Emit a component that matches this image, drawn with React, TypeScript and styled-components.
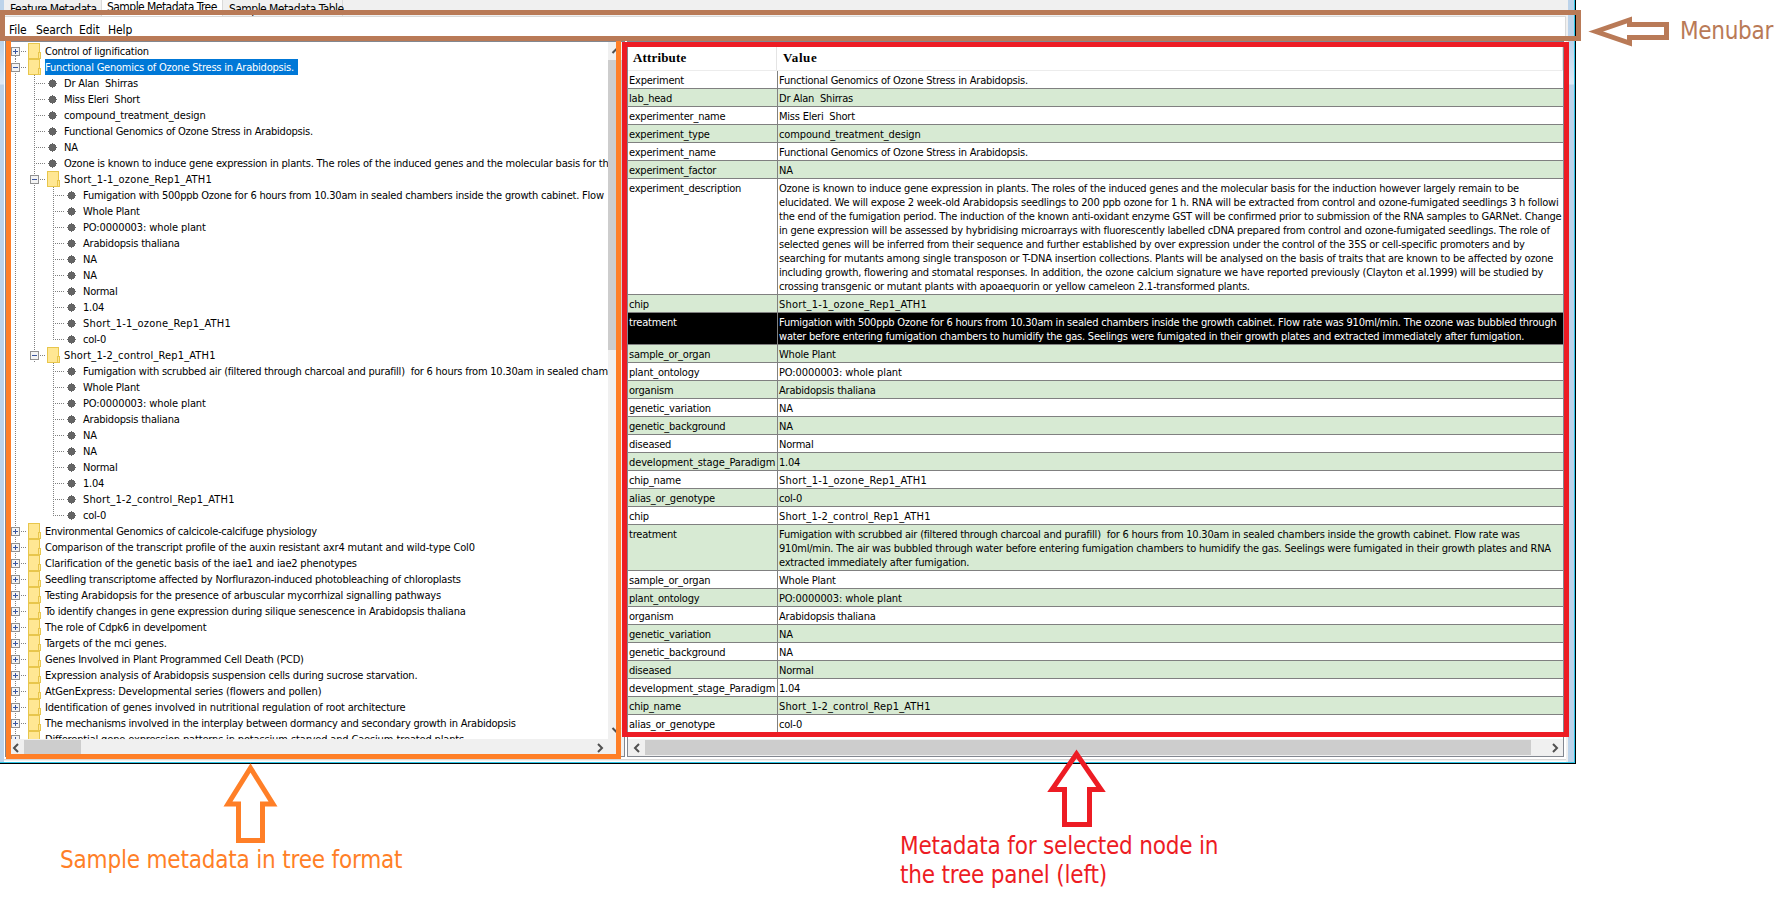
import React from 'react';
import styled, { createGlobalStyle } from 'styled-components';

const GlobalStyle = createGlobalStyle`
  * { box-sizing: border-box; }
  body {
    margin: 0;
    background: #fff;
    font-family: 'DejaVu Sans Condensed', 'DejaVu Sans', sans-serif;
    font-stretch: condensed;
    font-size: 11px;
    color: #000;
    overflow: hidden;
  }
`;

const GREY = '#828790';
const dots = 'repeating-linear-gradient(#808080 0 1px, transparent 1px 2px)';
const dotsX = 'repeating-linear-gradient(90deg, #808080 0 1px, transparent 1px 2px)';

const Page = styled.div`
  position: relative;
  width: 1783px;
  height: 897px;
  overflow: hidden;
`;

const Window = styled.div`
  width: 1576px;
  height: 764px;
  display: flex;
  flex-direction: column;
  border-right: 1px solid #000;
  border-bottom: 1px solid #000;
  background: #f0f0f0;
`;

const Frame = styled.div`
  flex: 1;
  min-height: 0;
  display: flex;
  border-right: 1px solid #2ec4e6;
  border-bottom: 1px solid #2ec4e6;
`;

const Edge = styled.div<{ $w: number }>`
  width: ${(p) => p.$w}px;
  background: linear-gradient(#bcd3ea 0 42px, #dfeaf6 84px, #bcd3ea 85px);
`;

const Client = styled.div`
  flex: 1;
  min-width: 0;
  display: flex;
  flex-direction: column;
  background: #fff;
  border-right: 2px solid #f0f0f0;
`;

const BottomLine = styled.div`
  height: 2px;
  margin-top: 2px;
  border-top: 1px solid #d9d9d9;
  background: #f0f0f0;
`;

const TabStrip = styled.div`
  height: 16px;
  display: flex;
  background: #f0f0f0;
  font-size: 12px;
  line-height: 14px;
  white-space: pre;
`;

const Tab = styled.div<{ $w: number; $active?: boolean }>`
  width: ${(p) => p.$w}px;
  padding: ${(p) => (p.$active ? '0 0 0 5px' : '2px 0 0 6px')};
  height: 16px;
  background: ${(p) => (p.$active ? '#fff' : '#f0f0f0')};
  border-right: 1px solid #d9d9d9;
  letter-spacing: -0.55px;
`;

const MenuBar = styled.div`
  height: 25px;
  display: flex;
  gap: 9px;
  padding: 6px 0 0 5px;
  border-top: 1px solid #d9d9d9;
  border-right: 1px solid #d9d9d9;
  font-size: 12px;
  line-height: 14px;
`;

const MenuItem = styled.span<{ $w: number }>`
  width: ${(p) => p.$w}px;
  letter-spacing: -0.1px;
  white-space: nowrap;
`;

const Panels = styled.div`
  height: 716px;
  display: flex;
  gap: 2px;
  padding-left: 1px;
`;

const Panel = styled.div<{ $w: number }>`
  width: ${(p) => p.$w}px;
  border: 1px solid ${GREY};
  display: flex;
  flex-direction: column;
  background: #fff;
  overflow: hidden;
`;

const TreeArea = styled.div`
  height: 697px;
  display: flex;
`;

const Tree = styled.div`
  width: 602px;
  padding: 1px 0 0 5px;
  overflow: hidden;
`;

const TreeRow = styled.div`
  height: 16px;
  display: flex;
  line-height: 17px;
  white-space: pre;
`;

const Rail = styled.div<{ $on: boolean }>`
  width: 19px;
  height: 16px;
  flex: none;
  padding-left: 4px;
  &::before {
    content: '';
    display: block;
    width: 1px;
    height: 16px;
    background: ${(p) => (p.$on ? dots : 'none')};
  }
`;

const Elbow = styled.div<{ $last?: boolean }>`
  width: 18px;
  height: 16px;
  flex: none;
  padding-left: 4px;
  display: flex;
  align-items: flex-start;
  &::before {
    content: '';
    width: 1px;
    height: ${(p) => (p.$last ? 9 : 16)}px;
    background: ${dots};
  }
  &::after {
    content: '';
    margin: 8px 0 0 1px;
    width: 9px;
    height: 1px;
    background: ${dotsX};
  }
`;

const Toggle = styled.svg`
  width: 17px;
  height: 16px;
  flex: none;
`;

const Folder = styled.svg`
  width: 13px;
  height: 16px;
  flex: none;
  margin-right: 4px;
`;

const Bullet = styled.svg`
  width: 9px;
  height: 16px;
  flex: none;
  margin-right: 7px;
`;

const Label = styled.span<{ $selected?: boolean; $ls: number }>`
  height: 16px;
  letter-spacing: ${(p) => p.$ls}px;
  padding-right: ${(p) => (p.$selected ? 4 : 0)}px;
  color: ${(p) => (p.$selected ? '#fff' : '#000')};
  background: ${(p) => (p.$selected ? '#0078d7' : 'transparent')};
`;

const VScroll = styled.div`
  width: 16px;
  flex: none;
  display: flex;
  flex-direction: column;
  background: #f0f0f0;
`;

const HScroll = styled.div<{ $corner?: boolean }>`
  height: 17px;
  display: flex;
  align-items: flex-start;
  padding: ${(p) => (p.$corner ? '1px 16px 1px 1px' : '1px 0')};
  background: #f0f0f0;
`;

const ArrowBox = styled.svg`
  width: 17px;
  height: 17px;
  flex: none;
  fill: none;
  stroke: #505050;
  stroke-width: 2;
`;

const Thumb = styled.div<{ $w?: number; $h?: number }>`
  width: ${(p) => (p.$w ? `${p.$w}px` : '100%')};
  height: ${(p) => (p.$h ? `${p.$h}px` : '100%')};
  margin-top: ${(p) => (p.$h ? 1 : 0)}px;
  background: #cdcdcd;
`;

const Spacer = styled.div`
  flex: 1;
`;

const HeadRow = styled.div`
  height: 29px;
  display: flex;
  border-bottom: 1px solid #ececec;
  font: bold 13px/16px 'Liberation Serif', serif;
`;

const HeadCell = styled.div<{ $w: number; $pad: number; $ls: number }>`
  width: ${(p) => p.$w}px;
  padding: 8px 0 0 ${(p) => p.$pad}px;
  letter-spacing: ${(p) => p.$ls}px;
  border-right: 1px solid #e4e4e4;
`;

const Row = styled.div<{ $tone: 'odd' | 'even' | 'picked' }>`
  display: flex;
  line-height: 14px;
  border-bottom: 1px solid #808080;
  background: ${(p) => ({ odd: '#fff', even: '#d7ead3', picked: '#000' })[p.$tone]};
  color: ${(p) => (p.$tone === 'picked' ? '#fff' : '#000')};
`;

const Key = styled.div<{ $ls: number }>`
  width: 150px;
  flex: none;
  padding: 3px 0 0 1px;
  border-right: 1px solid #808080;
  letter-spacing: ${(p) => p.$ls}px;
  white-space: nowrap;
`;

const Value = styled.div`
  flex: 1;
  min-width: 0;
  overflow: hidden;
  padding: 3px 0 0 1px;
`;

const Line = styled.div<{ $ls: number }>`
  white-space: pre;
  letter-spacing: ${(p) => p.$ls}px;
`;

const Table = styled.div`
  height: 697px;
  overflow: hidden;
`;

const Outline = styled.div<{ $x: number; $y: number; $w: number; $h: number; $c: string }>`
  position: absolute;
  left: ${(p) => p.$x}px;
  top: ${(p) => p.$y}px;
  width: ${(p) => p.$w}px;
  height: ${(p) => p.$h}px;
  border: 5px solid ${(p) => p.$c};
`;

const Arrows = styled.svg`
  position: absolute;
  inset: 0;
  fill: none;
  stroke-width: 5;
`;

const Note = styled.div<{ $x: number; $y: number; $c: string; $ls: number }>`
  position: absolute;
  left: ${(p) => p.$x}px;
  top: ${(p) => p.$y}px;
  color: ${(p) => p.$c};
  font-size: 24px;
  line-height: 29px;
  letter-spacing: ${(p) => p.$ls}px;
  white-space: pre;
`;

const BASE_SPACING = -0.215;
const SPACING: Record<string, number> = {
  'Short_1-1_ozone_Rep1_ATH1': 0.2,
  'Short_1-2_control_Rep1_ATH1': 0.15,
  'compound_treatment_design': -0.12,
  'development_stage_Paradigm': -0.12,
  'PO:0000003: whole plant': -0.1,
  'Environmental Genomics of calcicole-calcifuge physiology': -0.28,
  'Targets of the mci genes.': -0.12,
  'Differential gene expression patterns in potassium-starved and Caesium-treated plants': -0.16,
  'The mechanisms involved in the interplay between dormancy and secondary growth in Arabidopsis': -0.24,
  'AtGenExpress: Developmental series (flowers and pollen)': -0.16,
  'Comparison of the transcript profile of the auxin resistant axr4 mutant and wild-type Col0': -0.175,
  'Clarification of the genetic basis of the iae1 and iae2 phenotypes': -0.18,
  'Testing Arabidopsis for the presence of arbuscular mycorrhizal signalling pathways': -0.175,
  'Identification of genes involved in nutritional regulation of root architecture': -0.17,
  'Expression analysis of Arabidopsis suspension cells during sucrose starvation.': -0.185,
};
const spacing = (t: string) => SPACING[t] ?? BASE_SPACING;

type Node = { t: string; d: number; k: 'open' | 'closed' | 'leaf'; sel?: boolean; last?: boolean; rail?: boolean };

const leaf = (t: string, d: number, rail = true, last = false): Node => ({ t, d, k: 'leaf', rail, last });
const closed = (t: string): Node => ({ t, d: 0, k: 'closed' });

const nodes: Node[] = [
  closed('Control of lignification'),
  { t: 'Functional Genomics of Ozone Stress in Arabidopsis.', d: 0, k: 'open', sel: true },
  leaf('Dr Alan  Shirras', 1),
  leaf('Miss Eleri  Short', 1),
  leaf('compound_treatment_design', 1),
  leaf('Functional Genomics of Ozone Stress in Arabidopsis.', 1),
  leaf('NA', 1),
  leaf('Ozone is known to induce gene expression in plants. The roles of the induced genes and the molecular basis for th', 1),
  { t: 'Short_1-1_ozone_Rep1_ATH1', d: 1, k: 'open' },
  leaf('Fumigation with 500ppb Ozone for 6 hours from 10.30am in sealed chambers inside the growth cabinet. Flow', 2),
  leaf('Whole Plant', 2),
  leaf('PO:0000003: whole plant', 2),
  leaf('Arabidopsis thaliana', 2),
  leaf('NA', 2),
  leaf('NA', 2),
  leaf('Normal', 2),
  leaf('1.04', 2),
  leaf('Short_1-1_ozone_Rep1_ATH1', 2),
  leaf('col-0', 2, true, true),
  { t: 'Short_1-2_control_Rep1_ATH1', d: 1, k: 'open' },
  leaf('Fumigation with scrubbed air (filtered through charcoal and purafill)  for 6 hours from 10.30am in sealed cham', 2, false),
  leaf('Whole Plant', 2, false),
  leaf('PO:0000003: whole plant', 2, false),
  leaf('Arabidopsis thaliana', 2, false),
  leaf('NA', 2, false),
  leaf('NA', 2, false),
  leaf('Normal', 2, false),
  leaf('1.04', 2, false),
  leaf('Short_1-2_control_Rep1_ATH1', 2, false),
  leaf('col-0', 2, false, true),
  closed('Environmental Genomics of calcicole-calcifuge physiology'),
  closed('Comparison of the transcript profile of the auxin resistant axr4 mutant and wild-type Col0'),
  closed('Clarification of the genetic basis of the iae1 and iae2 phenotypes'),
  closed('Seedling transcriptome affected by Norflurazon-induced photobleaching of chloroplasts'),
  closed('Testing Arabidopsis for the presence of arbuscular mycorrhizal signalling pathways'),
  closed('To identify changes in gene expression during silique senescence in Arabidopsis thaliana'),
  closed('The role of Cdpk6 in develpoment'),
  closed('Targets of the mci genes.'),
  closed('Genes Involved in Plant Programmed Cell Death (PCD)'),
  closed('Expression analysis of Arabidopsis suspension cells during sucrose starvation.'),
  closed('AtGenExpress: Developmental series (flowers and pollen)'),
  closed('Identification of genes involved in nutritional regulation of root architecture'),
  closed('The mechanisms involved in the interplay between dormancy and secondary growth in Arabidopsis'),
  closed('Differential gene expression patterns in potassium-starved and Caesium-treated plants'),
];

const rows: [string, string[]][] = [
  ['Experiment', ['Functional Genomics of Ozone Stress in Arabidopsis.']],
  ['lab_head', ['Dr Alan  Shirras']],
  ['experimenter_name', ['Miss Eleri  Short']],
  ['experiment_type', ['compound_treatment_design']],
  ['experiment_name', ['Functional Genomics of Ozone Stress in Arabidopsis.']],
  ['experiment_factor', ['NA']],
  ['experiment_description', [
    'Ozone is known to induce gene expression in plants. The roles of the induced genes and the molecular basis for the induction however largely remain to be',
    'elucidated. We will expose 2 week-old Arabidopsis seedlings to 200 ppb ozone for 1 h. RNA will be extracted from control and ozone-fumigated seedlings 3 h followi',
    'the end of the fumigation period. The induction of the known anti-oxidant enzyme GST will be confirmed prior to submission of the RNA samples to GARNet. Change',
    'in gene expression will be assessed by hybridising microarrays with fluorescently labelled cDNA prepared from control and ozone-fumigated seedlings. The role of',
    'selected genes will be inferred from their sequence and further established by over expression under the control of the 35S or cell-specific promoters and by',
    'searching for mutants among single transposon or T-DNA insertion collections. Plants will be analysed on the basis of traits that are known to be affected by ozone',
    'including growth, flowering and stomatal responses. In addition, the ozone calcium signature we have reported previously (Clayton et al.1999) will be studied by',
    'crossing transgenic or mutant plants with apoaequorin or yellow cameleon 2.1-transformed plants.',
  ]],
  ['chip', ['Short_1-1_ozone_Rep1_ATH1']],
  ['treatment', [
    'Fumigation with 500ppb Ozone for 6 hours from 10.30am in sealed chambers inside the growth cabinet. Flow rate was 910ml/min. The ozone was bubbled through',
    'water before entering fumigation chambers to humidify the gas. Seelings were fumigated in their growth plates and extracted immediately after fumigation.',
  ]],
  ['sample_or_organ', ['Whole Plant']],
  ['plant_ontology', ['PO:0000003: whole plant']],
  ['organism', ['Arabidopsis thaliana']],
  ['genetic_variation', ['NA']],
  ['genetic_background', ['NA']],
  ['diseased', ['Normal']],
  ['development_stage_Paradigm', ['1.04']],
  ['chip_name', ['Short_1-1_ozone_Rep1_ATH1']],
  ['alias_or_genotype', ['col-0']],
  ['chip', ['Short_1-2_control_Rep1_ATH1']],
  ['treatment', [
    'Fumigation with scrubbed air (filtered through charcoal and purafill)  for 6 hours from 10.30am in sealed chambers inside the growth cabinet. Flow rate was',
    '910ml/min. The air was bubbled through water before entering fumigation chambers to humidify the gas. Seelings were fumigated in their growth plates and RNA',
    'extracted immediately after fumigation.',
  ]],
  ['sample_or_organ', ['Whole Plant']],
  ['plant_ontology', ['PO:0000003: whole plant']],
  ['organism', ['Arabidopsis thaliana']],
  ['genetic_variation', ['NA']],
  ['genetic_background', ['NA']],
  ['diseased', ['Normal']],
  ['development_stage_Paradigm', ['1.04']],
  ['chip_name', ['Short_1-2_control_Rep1_ATH1']],
  ['alias_or_genotype', ['col-0']],
];

function ToggleIcon({ open, first }: { open: boolean; first?: boolean }) {
  return (
    <Toggle viewBox="0 0 17 16" shapeRendering="crispEdges">
      <path d={first ? 'M4.5 13V16' : 'M4.5 0V16'} stroke="#808080" strokeDasharray="1 1" />
      <path d="M10 8.5H16" stroke="#808080" strokeDasharray="1 1" />
      <rect x="0.5" y="4.5" width="8" height="8" fill="#f4f4f4" stroke="#919191" />
      <path d="M2 8.5H7" stroke="#3b579d" />
      {!open && <path d="M4.5 6V11" stroke="#3b579d" />}
    </Toggle>
  );
}

function FolderIcon() {
  return (
    <Folder viewBox="0 0 13 16" shapeRendering="crispEdges">
      <rect x="0.5" y="0.5" width="11" height="15" fill="#ffe793" stroke="#e8c64c" />
      <rect x="10.5" y="9.5" width="2" height="6" fill="#ffe793" stroke="#e8c64c" />
    </Folder>
  );
}

function BulletIcon() {
  return (
    <Bullet viewBox="0 0 9 16" shapeRendering="crispEdges">
      <path d="M4 4h1v1h2v1h1v2h1v1h-1v2h-1v1h-2v1h-1v-1h-2v-1h-1v-2h-1v-1h1v-2h1v-1h2z" fill="#646464" />
    </Bullet>
  );
}

function TreeItem({ n, first }: { n: Node; first: boolean }) {
  return (
    <TreeRow>
      {n.d > 0 && <Rail $on />}
      {n.d > 1 && <Rail $on={!!n.rail} />}
      {n.k === 'leaf' ? (
        <>
          <Elbow $last={n.last} />
          <BulletIcon />
        </>
      ) : (
        <>
          <ToggleIcon open={n.k === 'open'} first={first} />
          <FolderIcon />
        </>
      )}
      <Label $selected={n.sel} $ls={spacing(n.t)}>{n.t}</Label>
    </TreeRow>
  );
}

export default function App() {
  return (
    <Page>
      <GlobalStyle />
      <Window>
        <Frame>
          <Edge $w={4} />
          <Client>
            <TabStrip>
              <Tab $w={98}>Feature Metadata</Tab>
              <Tab $w={121} $active>Sample Metadata Tree</Tab>
              <Tab $w={120}>Sample Metadata Table</Tab>
            </TabStrip>
            <MenuBar>
              <MenuItem $w={18}>File</MenuItem>
              <MenuItem $w={34}>Search</MenuItem>
              <MenuItem $w={20}>Edit</MenuItem>
              <MenuItem $w={26}>Help</MenuItem>
            </MenuBar>
            <Panels>
              <Panel $w={620}>
                <TreeArea>
                  <Tree>
                    {nodes.map((n, i) => (
                      <TreeItem key={i} n={n} first={i === 0} />
                    ))}
                  </Tree>
                  <VScroll>
                    <ArrowBox viewBox="0 0 17 17"><path d="M4.500 11L8.500 7L12.500 11" /></ArrowBox>
                    <Thumb $h={290} />
                    <Spacer />
                    <ArrowBox viewBox="0 0 17 17"><path d="M4.500 6L8.500 10L12.500 6" /></ArrowBox>
                  </VScroll>
                </TreeArea>
                <HScroll $corner>
                  <ArrowBox viewBox="0 0 17 17"><path d="M11 4L7 8L11 12" /></ArrowBox>
                  <Thumb $w={57} />
                  <Spacer />
                  <ArrowBox viewBox="0 0 17 17"><path d="M7 4L11 8L7 12" /></ArrowBox>
                </HScroll>
              </Panel>
              <Panel $w={937}>
                <Table>
                  <HeadRow>
                    <HeadCell $w={149} $pad={5} $ls={0.15}>Attribute</HeadCell>
                    <HeadCell $w={786} $pad={6} $ls={0.6}>Value</HeadCell>
                  </HeadRow>
                  {rows.map(([k, lines], i) => (
                    <Row key={i} $tone={i === 8 ? 'picked' : i % 2 ? 'even' : 'odd'}>
                      <Key $ls={spacing(k)}>{k}</Key>
                      <Value>
                        {lines.map((l) => (
                          <Line key={l} $ls={spacing(l)}>{l}</Line>
                        ))}
                      </Value>
                    </Row>
                  ))}
                </Table>
                <HScroll>
                  <ArrowBox viewBox="0 0 17 17"><path d="M11 4L7 8L11 12" /></ArrowBox>
                  <Thumb $w={886} />
                  <Spacer />
                  <ArrowBox viewBox="0 0 17 17"><path d="M7 4L11 8L7 12" /></ArrowBox>
                </HScroll>
              </Panel>
            </Panels>
            <BottomLine />
          </Client>
          <Edge $w={6} />
        </Frame>
      </Window>
      <Outline $x={6} $y={36} $w={615} $h={723} $c="#ff7f27" />
      <Outline $x={0} $y={10} $w={1581} $h={31} $c="#b97a57" />
      <Outline $x={622} $y={42} $w={947} $h={695} $c="#ed1c24" />
      <Arrows width="1783" height="897" viewBox="0 0 1783 897">
        <path d="M250.500 768L273 804H262.500V840.500H238.500V804H228Z" stroke="#ff7f27" />
        <path d="M1076.500 754L1101 789.500H1089.500V824.500H1064.500V789.500H1052Z" stroke="#ed1c24" />
        <path d="M1596 31.500L1629.500 20V24.500H1666.500V37.500H1629.500V43Z" stroke="#b97a57" />
      </Arrows>
      <Note $x={1680} $y={17} $c="#b97a57" $ls={-0.3}>Menubar</Note>
      <Note $x={60} $y={846} $c="#ff7f27" $ls={-0.19}>Sample metadata in tree format</Note>
      <Note $x={900} $y={832} $c="#ed1c24" $ls={-0.2}>{'Metadata for selected node in\nthe tree panel (left)'}</Note>
    </Page>
  );
}
